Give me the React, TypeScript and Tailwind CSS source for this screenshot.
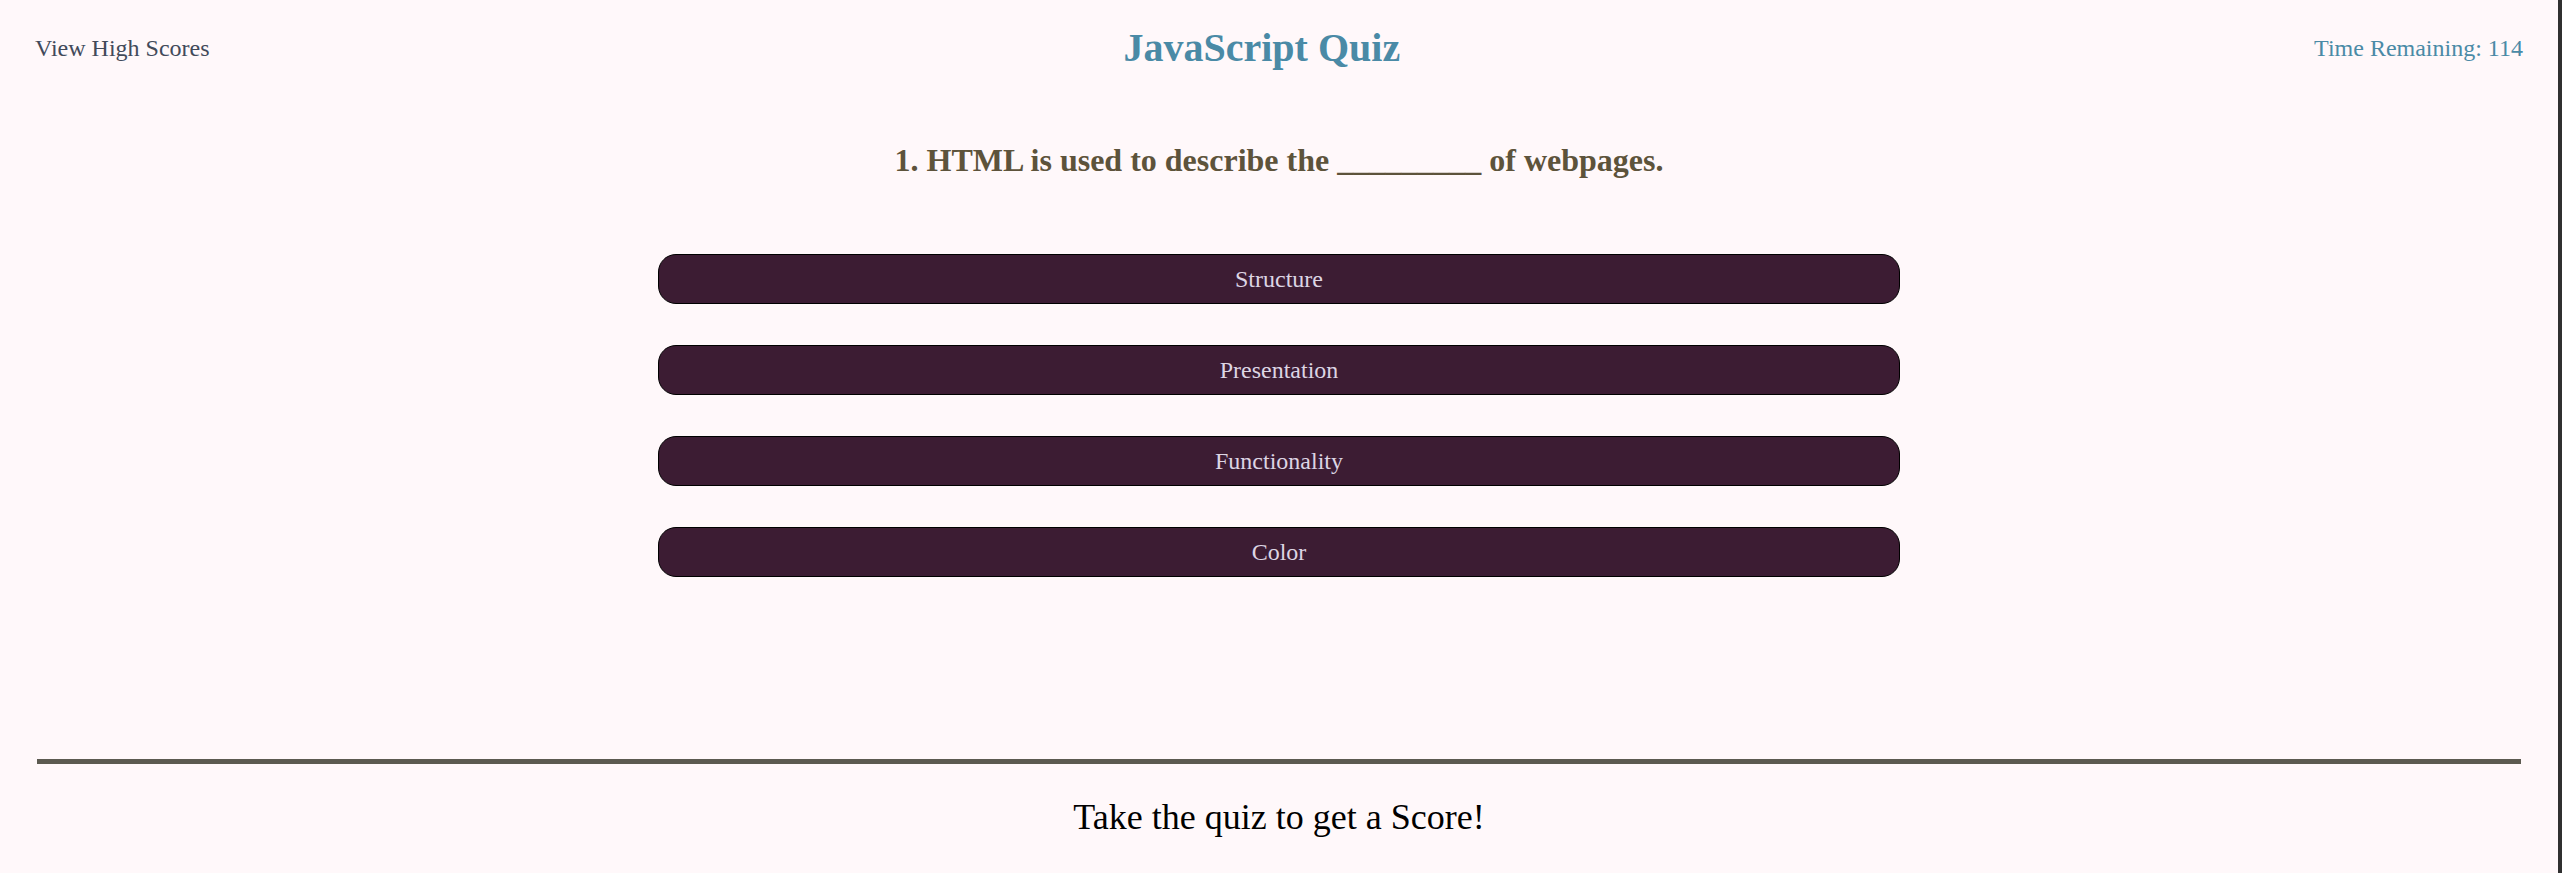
const choices = ['Structure', 'Presentation', 'Functionality', 'Color'];

export default function App() {
  return (
    <div className="flex min-h-screen bg-[#fff8fa] font-['Liberation_Serif','Times_New_Roman',serif]">
      <div className="flex flex-1 flex-col">
        {/* header */}
        <header className="flex items-center justify-between px-[35px] pt-6">
          <a className="text-[24px] leading-[48px] text-[#424a5a]">View High Scores</a>
          <h1 className="text-[40px] font-bold leading-[48px] text-[#4a8aa6]">JavaScript Quiz</h1>
          <span className="text-[24px] leading-[48px] text-[#4a8aa6]">Time Remaining: 114</span>
        </header>

        <main className="flex flex-col items-center">
          <h2 className="mt-[68px] text-[32px] font-bold leading-[40px] text-[#5d533b]">
            1. HTML is used to describe the _________ of webpages.
          </h2>

          <div className="mt-[74px] flex flex-col gap-[41px]">
            {choices.map((c) => (
              <button
                key={c}
                className="h-[50px] w-[1242px] rounded-[18px] border border-black bg-[#3c1c33] text-[24px] leading-[48px] text-[#ddd5e4]"
              >
                {c}
              </button>
            ))}
          </div>
        </main>

        <footer className="mt-[182px] flex flex-col items-center">
          <div className="h-[5px] w-[calc(100%-74px)] bg-[#5c5a50]" />
          <p className="mt-[31px] text-[36px] leading-[44px] text-black">Take the quiz to get a Score!</p>
        </footer>
      </div>
      <div className="w-[4px] bg-[#303030]" />
    </div>
  );
}
